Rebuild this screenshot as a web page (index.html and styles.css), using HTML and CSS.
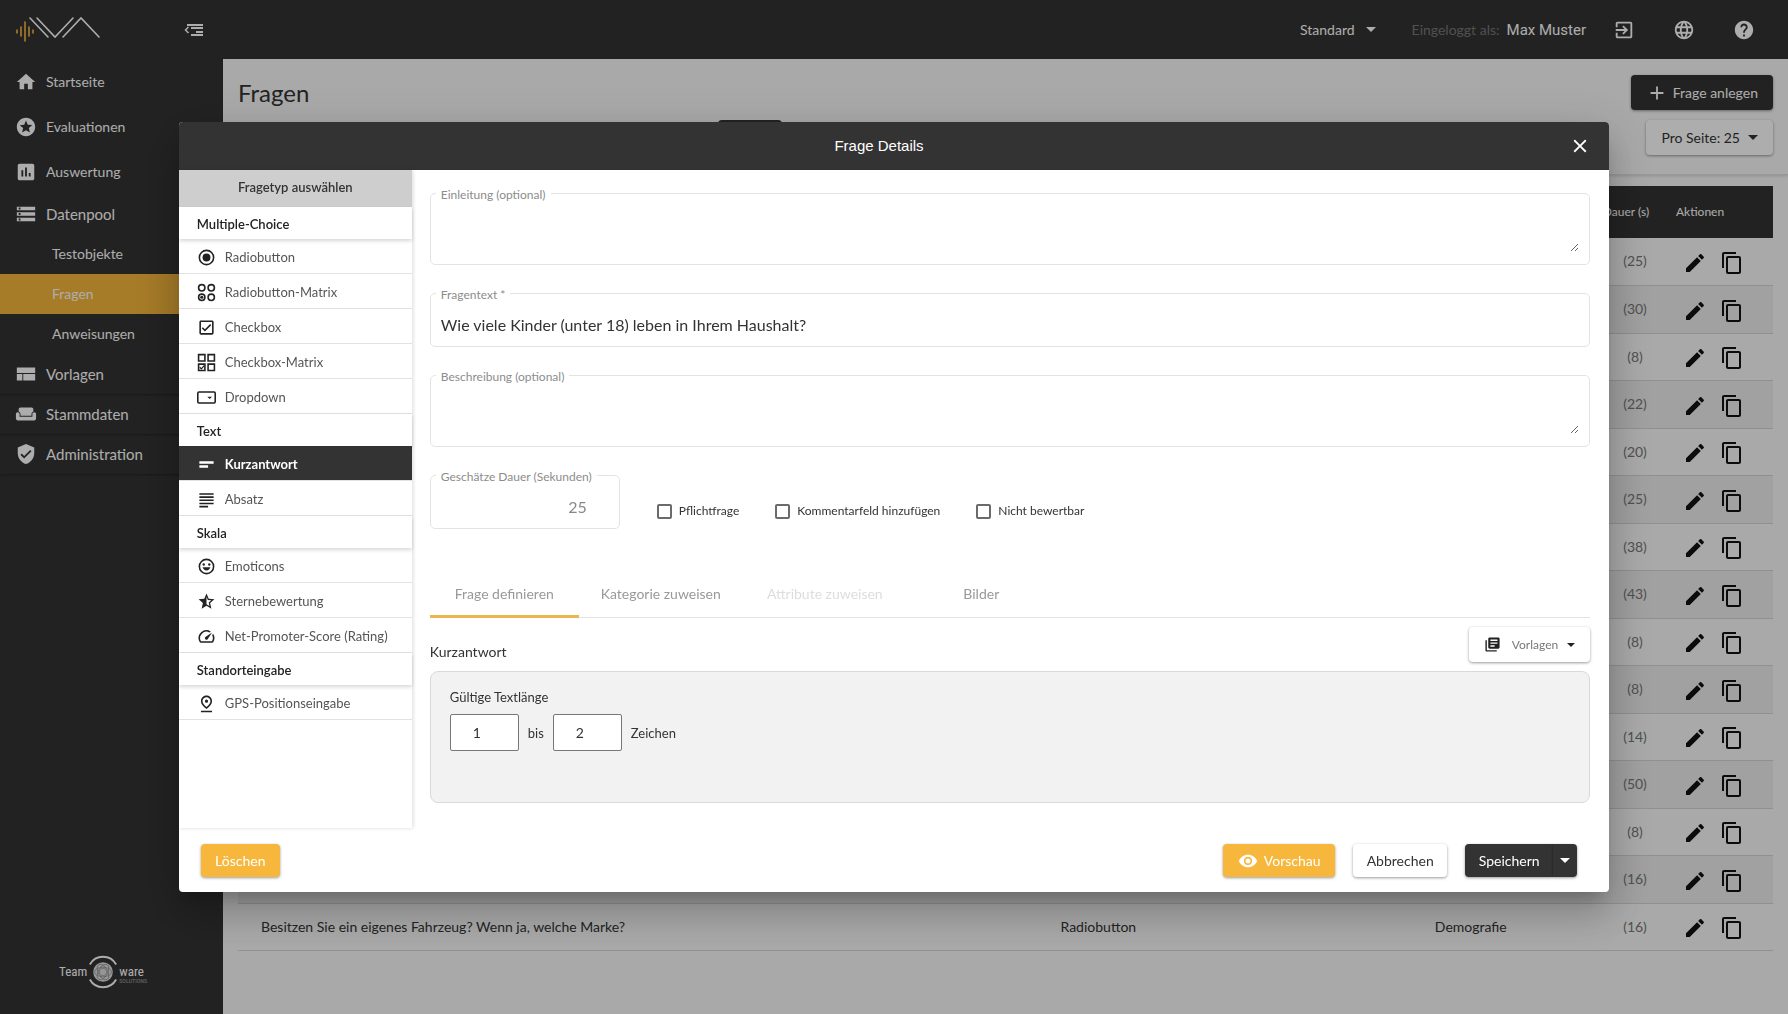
FILE: index.html
```html
<!DOCTYPE html>
<html lang="de">
<head>
<meta charset="utf-8">
<meta name="viewport" content="width=device-width, initial-scale=1">
<title>Fragen</title>
<link rel="stylesheet" href="styles.css">
</head>
<body>
<svg class="sprite" aria-hidden="true">
  <symbol id="home" viewBox="0 0 24 24"><path d="M10 20v-6h4v6h5v-8h3L12 3 2 12h3v8z"/></symbol>
  <symbol id="stars" viewBox="0 0 24 24"><path d="M11.99 2C6.47 2 2 6.48 2 12s4.47 10 9.99 10C17.52 22 22 17.52 22 12S17.52 2 11.99 2zm4.24 16L12 15.45 7.77 18l1.12-4.81-3.73-3.23 4.92-.42L12 5l1.92 4.53 4.92.42-3.73 3.23L16.23 18z"/></symbol>
  <symbol id="chart" viewBox="0 0 24 24"><path d="M19 3H5c-1.1 0-2 .9-2 2v14c0 1.1.9 2 2 2h14c1.1 0 2-.9 2-2V5c0-1.1-.9-2-2-2zM9 17H7v-7h2v7zm4 0h-2V7h2v10zm4 0h-2v-4h2v4z"/></symbol>
  <symbol id="storage" viewBox="0 0 24 24"><path d="M2 20h20v-4H2v4zm2-3h2v2H4v-2zM2 4v4h20V4H2zm4 3H4V5h2v2zm-4 7h20v-4H2v4zm2-3h2v2H4v-2z"/></symbol>
  <symbol id="quilt" viewBox="0 0 24 24"><path d="M2 5h20v6H2zM2 12h6v7H2zM9 12h13v7H9z"/></symbol>
  <symbol id="weekend" viewBox="0 0 24 24"><path d="M21 10c-1.1 0-2 .9-2 2v3H5v-3c0-1.1-.9-2-2-2s-2 .9-2 2v5c0 1.1.9 2 2 2h18c1.1 0 2-.9 2-2v-5c0-1.1-.9-2-2-2zm-3-5H6c-1.1 0-2 .9-2 2v2.15c1.16.41 2 1.51 2 2.82V14h12v-2.03c0-1.3.84-2.4 2-2.82V7c0-1.1-.9-2-2-2z"/></symbol>
  <symbol id="shield" viewBox="0 0 24 24"><path d="M12 1L3 5v6c0 5.55 3.84 10.74 9 12 5.16-1.26 9-6.45 9-12V5l-9-4zm-2 16l-4-4 1.41-1.41L10 14.17l6.59-6.59L18 9l-8 8z"/></symbol>
  <symbol id="exit" viewBox="0 0 24 24"><path d="M10.09 15.59L11.5 17l5-5-5-5-1.41 1.41L12.67 11H3v2h9.67l-2.58 2.59zM19 3H5c-1.11 0-2 .9-2 2v4h2V5h14v14H5v-4H3v4c0 1.1.89 2 2 2h14c1.1 0 2-.9 2-2V5c0-1.1-.9-2-2-2z"/></symbol>
  <symbol id="globe" viewBox="0 0 24 24"><path d="M11.99 2C6.47 2 2 6.48 2 12s4.47 10 9.99 10C17.52 22 22 17.52 22 12S17.52 2 11.99 2zm6.93 6h-2.95c-.32-1.25-.78-2.45-1.38-3.56 1.84.63 3.37 1.91 4.33 3.56zM12 4.04c.83 1.2 1.48 2.53 1.91 3.96h-3.82c.43-1.43 1.08-2.76 1.91-3.96zM4.26 14C4.1 13.36 4 12.69 4 12s.1-1.36.26-2h3.38c-.08.66-.14 1.32-.14 2 0 .68.06 1.34.14 2H4.26zm.82 2h2.95c.32 1.25.78 2.45 1.38 3.56-1.84-.63-3.37-1.9-4.33-3.56zm2.95-8H5.08c.96-1.66 2.49-2.93 4.33-3.56C8.81 5.55 8.35 6.75 8.03 8zM12 19.96c-.83-1.2-1.48-2.53-1.91-3.96h3.82c-.43 1.43-1.08 2.76-1.91 3.96zM14.34 14H9.66c-.09-.66-.16-1.32-.16-2 0-.68.07-1.35.16-2h4.68c.09.65.16 1.32.16 2 0 .68-.07 1.34-.16 2zm.25 5.56c.6-1.11 1.06-2.31 1.38-3.56h2.95c-.96 1.65-2.49 2.93-4.33 3.56zM16.36 14c.08-.66.14-1.32.14-2 0-.68-.06-1.34-.14-2h3.38c.16.64.26 1.31.26 2s-.1 1.36-.26 2h-3.38z"/></symbol>
  <symbol id="help" viewBox="0 0 24 24"><path d="M12 2C6.48 2 2 6.48 2 12s4.48 10 10 10 10-4.48 10-10S17.52 2 12 2zm1 17h-2v-2h2v2zm2.07-7.75l-.9.92C13.45 12.9 13 13.5 13 15h-2v-.5c0-1.1.45-2.1 1.17-2.83l1.24-1.26c.37-.36.59-.86.59-1.41 0-1.1-.9-2-2-2s-2 .9-2 2H8c0-2.21 1.79-4 4-4s4 1.79 4 4c0 .88-.36 1.68-.93 2.25z"/></symbol>
  <symbol id="edit" viewBox="0 0 24 24"><path d="M3 17.25V21h3.75L17.81 9.94l-3.75-3.75L3 17.25zM20.71 7.04c.39-.39.39-1.02 0-1.41l-2.34-2.34c-.39-.39-1.02-.39-1.41 0l-1.83 1.83 3.75 3.75 1.83-1.83z"/></symbol>
  <symbol id="copy" viewBox="0 0 24 24"><path d="M16 1H4c-1.1 0-2 .9-2 2v14h2V3h12V1zm3 4H8c-1.1 0-2 .9-2 2v14c0 1.1.9 2 2 2h11c1.1 0 2-.9 2-2V7c0-1.1-.9-2-2-2zm0 16H8V7h11v14z"/></symbol>
  <symbol id="plus" viewBox="0 0 24 24"><path d="M19 13h-6v6h-2v-6H5v-2h6V5h2v6h6v2z"/></symbol>
  <symbol id="caret" viewBox="0 0 10 5"><path d="M0 0l5 5 5-5z"/></symbol>
  <symbol id="close" viewBox="0 0 24 24"><path d="M19 6.41L17.59 5 12 10.59 6.41 5 5 6.41 10.59 12 5 17.59 6.41 19 12 13.41 17.59 19 19 17.59 13.41 12z"/></symbol>
  <symbol id="eye" viewBox="0 0 24 24"><path d="M12 4.5C7 4.5 2.73 7.61 1 12c1.73 4.39 6 7.5 11 7.5s9.27-3.11 11-7.5c-1.73-4.39-6-7.5-11-7.5zM12 17c-2.76 0-5-2.24-5-5s2.24-5 5-5 5 2.24 5 5-2.24 5-5 5zm0-8c-1.66 0-3 1.34-3 3s1.34 3 3 3 3-1.34 3-3-1.34-3-3-3z"/></symbol>
  <symbol id="books" viewBox="0 0 24 24"><path d="M4 6H2v14c0 1.1.9 2 2 2h14v-2H4V6zm16-4H8c-1.1 0-2 .9-2 2v12c0 1.1.9 2 2 2h12c1.1 0 2-.9 2-2V4c0-1.1-.9-2-2-2zm-1 9H9V9h10v2zm-4 4H9v-2h6v2zm4-8H9V5h10v2z"/></symbol>
  <symbol id="radio" viewBox="0 0 24 24"><circle cx="12" cy="12" r="9" fill="none" stroke="currentColor" stroke-width="2"/><circle cx="12" cy="12" r="5"/></symbol>
  <symbol id="radios" viewBox="0 0 24 24"><g fill="none" stroke="currentColor" stroke-width="2"><circle cx="6" cy="6" r="4"/><circle cx="18" cy="6" r="4"/><circle cx="6" cy="18" r="4"/><circle cx="18" cy="18" r="4"/></g><circle cx="6" cy="18" r="2"/></symbol>
  <symbol id="check" viewBox="0 0 24 24"><path d="M19 3H5c-1.1 0-2 .9-2 2v14c0 1.1.9 2 2 2h14c1.1 0 2-.9 2-2V5c0-1.1-.9-2-2-2zm0 16H5V5h14v14zM17.99 9l-1.41-1.42-6.59 6.59-2.58-2.57-1.42 1.41 4 3.99z"/></symbol>
  <symbol id="checks" viewBox="0 0 24 24"><g fill="none" stroke="currentColor" stroke-width="2"><path d="M2 2h8v8H2zM14 2h8v8h-8zM2 14h8v8H2zM14 14h8v8h-8z"/><path d="M3.500 18l2 2 3.500-4" stroke-width="1.500"/></g></symbol>
  <symbol id="dropdown" viewBox="0 0 24 24"><rect x="1" y="5" width="22" height="14" rx="1.500" fill="none" stroke="currentColor" stroke-width="2"/><path d="M13 11h6l-3 3z"/></symbol>
  <symbol id="short" viewBox="0 0 24 24"><path d="M3 8h18v3H3zM3 13h11v3H3z"/></symbol>
  <symbol id="lines" viewBox="0 0 24 24"><path d="M3 4h18v2H3zM3 8h18v2H3zM3 12h18v2H3zM3 16h18v2H3zM3 20h11v2H3z"/></symbol>
  <symbol id="mood" viewBox="0 0 24 24"><circle cx="12" cy="12" r="9" fill="none" stroke="currentColor" stroke-width="2"/><circle cx="8.500" cy="9.500" r="1.500"/><circle cx="15.500" cy="9.500" r="1.500"/><path d="M7 13h10c-.8 2.500-2.600 4-5 4s-4.200-1.500-5-4z"/></symbol>
  <symbol id="halfstar" viewBox="0 0 24 24"><path d="M22 9.240l-7.190-.62L12 2 9.190 8.630 2 9.240l5.460 4.730L5.820 21 12 17.270 18.180 21l-1.630-7.030L22 9.240zM12 15.400V6.100l1.710 4.040 4.380.38-3.320 2.880 1 4.280L12 15.400z"/></symbol>
  <symbol id="speed" viewBox="0 0 24 24"><path d="M20.380 8.570l-1.230 1.850a8 8 0 0 1-.22 7.580H5.070A8 8 0 0 1 15.580 6.850l1.850-1.230A10 10 0 0 0 3.350 19a2 2 0 0 0 1.720 1h13.850a2 2 0 0 0 1.740-1 10 10 0 0 0-.27-10.440zm-9.790 6.840a2 2 0 0 0 2.830 0l5.660-8.490-8.490 5.660a2 2 0 0 0 0 2.830z"/></symbol>
  <symbol id="pin" viewBox="0 0 24 24"><path d="M12 2C8.730 2 5 4.460 5 9.150c0 3.120 2.330 6.410 7 9.850 4.670-3.440 7-6.730 7-9.850C19 4.460 15.270 2 12 2zm0 14.470c-3.280-2.650-5-5.170-5-7.320C7 5.400 10.070 4 12 4s5 1.400 5 5.150c0 2.160-1.720 4.670-5 7.320zM12 7a2 2 0 1 0 0 4 2 2 0 0 0 0-4zM5 21h14v2H5z"/></symbol>
</svg>

<div class="app">
  <aside class="sidebar">
    <div class="brand">
      <svg class="brand-logo" viewBox="0 0 86 30" role="img" aria-label="IVA">
        <g fill="none" stroke-linecap="round"><path d="M2 15v3M6 12v9M10 7v19M14 12v9M18 15v3" stroke="#f6b73c" stroke-width="1.600"/><path d="M15 3l18 19M22 3l18 19 18-19M48 22L66 3l18 19" stroke="#fff" stroke-width="1.600"/></g>
      </svg>
      <button class="icon-btn" type="button" aria-label="Menü einklappen"><svg class="fold" viewBox="0 0 20 14"><path d="M3 1h16v2H3zM7 4h12v2H7zM12 8h7v2h-7zM7 11h12v2H7z"/><path d="M4.500 4L1.500 7l3 3" fill="none" stroke="currentColor" stroke-width="1.500"/></svg></button>
    </div>
    <nav class="nav">
      <a class="tall" href="#"><svg class="icon"><use href="#home"/></svg>Startseite</a>
      <a class="tall" href="#"><svg class="icon"><use href="#stars"/></svg>Evaluationen</a>
      <a class="tall" href="#"><svg class="icon"><use href="#chart"/></svg>Auswertung</a>
      <a href="#"><svg class="icon"><use href="#storage"/></svg>Datenpool</a>
      <a class="sub" href="#">Testobjekte</a>
      <a class="sub active" href="#">Fragen</a>
      <a class="sub" href="#">Anweisungen</a>
      <a class="panel" href="#"><svg class="icon"><use href="#quilt"/></svg>Vorlagen</a>
      <a class="panel" href="#"><svg class="icon"><use href="#weekend"/></svg>Stammdaten</a>
      <a class="panel" href="#"><svg class="icon"><use href="#shield"/></svg>Administration</a>
    </nav>
    <div class="vendor">
      <span class="vendor-name">Team</span>
      <svg class="vendor-mark" viewBox="0 0 32 36" aria-hidden="true"><g fill="none" stroke="#fff"><path d="M2 10a16 16 0 0 1 28 0M2 26a16 16 0 0 0 28 0" stroke-width="2"/></g><circle cx="16" cy="18" r="10.500" fill="#ddd"/><g fill="none" stroke="#888" stroke-width=".7"><circle cx="16" cy="18" r="4"/><ellipse cx="16" cy="18" rx="9" ry="5"/><ellipse cx="16" cy="18" rx="9" ry="5" transform="rotate(60 16 18)"/><ellipse cx="16" cy="18" rx="9" ry="5" transform="rotate(120 16 18)"/></g></svg>
      <span class="vendor-name">ware<small>SOLUTIONS</small></span>
    </div>
  </aside>

  <div class="content">
    <header class="topbar">
      <button class="tenant" type="button">Standard <svg class="caret"><use href="#caret"/></svg></button>
      <span class="login-label">Eingeloggt als:</span>
      <span class="user">Max Muster</span>
      <div class="top-icons">
        <button class="icon-btn" type="button" aria-label="Abmelden"><svg class="icon"><use href="#exit"/></svg></button>
        <button class="icon-btn" type="button" aria-label="Sprache"><svg class="icon"><use href="#globe"/></svg></button>
        <button class="icon-btn" type="button" aria-label="Hilfe"><svg class="icon"><use href="#help"/></svg></button>
      </div>
    </header>
    <section class="page-head">
      <div class="head-row">
        <h1>Fragen</h1>
        <button class="btn dark create" type="button"><svg class="icon"><use href="#plus"/></svg>Frage anlegen</button>
      </div>
      <div class="head-row second">
        <span class="toggle"></span>
        <button class="btn light" type="button">Pro Seite: 25 <svg class="caret"><use href="#caret"/></svg></button>
      </div>
    </section>
    <main class="table-wrap">
      <table>
        <thead><tr><th class="c-text"></th><th class="c-type"></th><th class="c-cat"></th><th class="c-time">Dauer (s)</th><th class="c-act">Aktionen</th></tr></thead>
        <tbody id="rows"></tbody>
      </table>
    </main>
  </div>
</div>

<div class="backdrop">
  <div class="dialog" role="dialog" aria-modal="true" aria-labelledby="dlg-title">
    <header class="dlg-head">
      <h2 id="dlg-title">Frage Details</h2>
      <button class="icon-btn" type="button" aria-label="Schließen"><svg class="icon"><use href="#close"/></svg></button>
    </header>
    <div class="dlg-body">
      <div class="types">
        <div class="types-title">Fragetyp auswählen</div>
        <h3>Multiple-Choice</h3>
        <button type="button"><svg><use href="#radio"/></svg>Radiobutton</button>
        <button type="button"><svg><use href="#radios"/></svg>Radiobutton-Matrix</button>
        <button type="button"><svg><use href="#check"/></svg>Checkbox</button>
        <button type="button"><svg><use href="#checks"/></svg>Checkbox-Matrix</button>
        <button type="button"><svg><use href="#dropdown"/></svg>Dropdown</button>
        <h3>Text</h3>
        <button class="selected" type="button"><svg><use href="#short"/></svg>Kurzantwort</button>
        <button type="button"><svg><use href="#lines"/></svg>Absatz</button>
        <h3>Skala</h3>
        <button type="button"><svg><use href="#mood"/></svg>Emoticons</button>
        <button type="button"><svg><use href="#halfstar"/></svg>Sternebewertung</button>
        <button type="button"><svg><use href="#speed"/></svg>Net-Promoter-Score (Rating)</button>
        <h3>Standorteingabe</h3>
        <button type="button"><svg><use href="#pin"/></svg>GPS-Positionseingabe</button>
      </div>
      <form class="form">
        <div class="field area"><label for="intro">Einleitung (optional)</label><textarea id="intro"></textarea></div>
        <div class="field"><label for="question">Fragentext *</label><input id="question" type="text" value="Wie viele Kinder (unter 18) leben in Ihrem Haushalt?"></div>
        <div class="field area"><label for="desc">Beschreibung (optional)</label><textarea id="desc"></textarea></div>
        <div class="options">
          <div class="field duration"><label for="duration">Geschätze Dauer (Sekunden)</label><input id="duration" type="text" inputmode="numeric" value="25"></div>
          <label class="tick"><input type="checkbox">Pflichtfrage</label>
          <label class="tick"><input type="checkbox">Kommentarfeld hinzufügen</label>
          <label class="tick"><input type="checkbox">Nicht bewertbar</label>
        </div>
        <div class="tabs" role="tablist">
          <button class="tab on" type="button" role="tab" aria-selected="true">Frage definieren</button>
          <button class="tab wide" type="button" role="tab">Kategorie zuweisen</button>
          <button class="tab wide" type="button" role="tab" disabled>Attribute zuweisen</button>
          <button class="tab" type="button" role="tab">Bilder</button>
        </div>
        <div class="answer-head">
          <h4>Kurzantwort</h4>
          <button class="btn light templates" type="button"><svg class="books"><use href="#books"/></svg>Vorlagen <svg class="caret"><use href="#caret"/></svg></button>
        </div>
        <div class="answer">
          <label for="min">Gültige Textlänge</label>
          <div class="range">
            <input id="min" type="text" inputmode="numeric" value="1">
            <label for="max">bis</label>
            <input id="max" type="text" inputmode="numeric" value="2">
            <span>Zeichen</span>
          </div>
        </div>
      </form>
    </div>
    <footer class="dlg-foot">
      <button class="btn yellow delete" type="button">Löschen</button>
      <button class="btn yellow preview" type="button"><svg class="eye"><use href="#eye"/></svg>Vorschau</button>
      <button class="btn light cancel" type="button">Abbrechen</button>
      <div class="split"><button class="btn dark" type="button">Speichern</button><button class="btn dark more" type="button" aria-label="Weitere Optionen"><svg class="caret"><use href="#caret"/></svg></button></div>
    </footer>
  </div>
</div>
<script src="rows.js"></script>
</body>
</html>
```
FILE: styles.css
```css
* { box-sizing: border-box; }
body {
  margin: 0;
  font-family: Lato, "Open Sans", sans-serif;
  font-size: 14px;
  line-height: 20px;
  color: #333;
  background: #fafafa;
}
button, input, textarea { font: inherit; color: inherit; }
button { border: 0; padding: 0; background: none; }
h1, h2, h3, h4 { margin: 0; font-weight: 400; }
svg { fill: currentColor; flex: none; }
.sprite { position: absolute; width: 0; height: 0; }
.icon { width: 22px; height: 22px; }
.caret { width: 10px; height: 5px; }
.icon-btn { display: flex; }

.app { display: flex; min-height: 100vh; }
.sidebar { width: 223px; display: flex; flex-direction: column; background: #333; color: #fff; }
.brand { height: 59px; padding: 0 19px 0 15px; display: flex; align-items: center; justify-content: space-between; }
.brand-logo { width: 86px; height: 30px; }
.fold { width: 20px; height: 14px; }
.nav a { display: flex; align-items: center; gap: 9px; height: 40px; padding-left: 15px; color: #fff; text-decoration: none; font-size: 15px; }
.nav a.tall { height: 45px; font-size: 14px; }
.nav a.sub { padding-left: 52px; font-size: 14px; }
.nav a.active { background: #f6b73c; }
.nav a.panel { box-shadow: 0 1px 2px rgba(0, 0, 0, .3); }
.vendor { margin: auto auto 24px 59px; display: flex; align-items: center; gap: 1px; }
.vendor-mark { width: 30px; height: 36px; }
.vendor-name { position: relative; font-family: "Liberation Sans Narrow", "Roboto Condensed", Roboto, sans-serif; font-size: 13px; }
.vendor-name small { position: absolute; left: 0; top: 15px; font-size: 6px; line-height: 8px; opacity: .5; }

.content { flex: 1; min-width: 0; display: flex; flex-direction: column; }
.topbar { height: 59px; padding-right: 33px; display: flex; align-items: center; justify-content: flex-end; background: #333; color: #fff; }
.tenant { display: flex; align-items: center; gap: 11px; }
.login-label { margin-left: 36px; color: #777; }
.user { margin-left: 7px; font-family: Roboto, sans-serif; font-size: 15px; }
.top-icons { display: flex; gap: 38px; margin-left: 27px; }
.page-head { padding: 16px 15px 19px; border-bottom: 1px solid #e0e0e0; box-shadow: 0 1px 3px rgba(0, 0, 0, .15); }
.head-row { display: flex; align-items: center; justify-content: space-between; }
.head-row.second { margin-top: 10px; align-items: flex-start; }
h1 { font-size: 24px; line-height: 35px; }
.toggle { width: 64px; height: 35px; margin-left: 480px; background: #333; border-radius: 4px; }
.table-wrap { padding: 11px 15px 0; }

.btn { display: inline-flex; align-items: center; height: 35px; border-radius: 4px; box-shadow: 0 1px 3px rgba(0, 0, 0, .4); }
.dark { background: #333; color: #fff; }
.light { background: #fff; gap: 8px; padding: 0 15px; }
.yellow { background: #f6b73c; color: #fff; }
.create { padding: 0 15px; gap: 5px; }

table { width: 100%; border-collapse: collapse; table-layout: fixed; }
th { height: 52px; padding: 0; background: #333; color: #fff; font-size: 12px; font-weight: 400; text-align: center; }
td { height: 47px; padding: 0; border-bottom: 1px solid #d5d5d5; }
tr:nth-child(even) td { height: 48px; background: #ededed; }
.c-text { width: 50%; }
.c-type { width: 23%; }
.c-cat { width: auto; }
.c-time { width: 80px; }
.c-act { width: 110px; }
th.c-time { padding-left: 6px; }
th.c-act { text-align: left; padding-left: 13px; }
td.c-text { padding-left: 23px; }
td.c-type { padding-left: 55px; }
td.c-cat, td.c-time { text-align: center; }
td.c-time { padding-left: 24px; color: #777; }
.actions { display: flex; gap: 13px; padding: 3px 0 0 20px; color: #111; }
.actions .icon { width: 24px; height: 24px; }

.backdrop { position: fixed; inset: 0; display: flex; align-items: center; justify-content: center; background: rgba(0, 0, 0, .32); }
.dialog { width: 80vw; background: #fff; border-radius: 4px; overflow: hidden; box-shadow: 0 11px 15px -7px rgba(0, 0, 0, .2), 0 24px 38px 3px rgba(0, 0, 0, .14), 0 9px 46px 8px rgba(0, 0, 0, .12); }
.dlg-head { display: flex; align-items: center; gap: 8px; height: 48px; padding: 0 18px; background: #333; color: #fff; }
.dlg-head h2 { flex: 1; text-align: center; font: 15px/20px "Liberation Sans", Arial, sans-serif; }
.dlg-body { display: flex; }

.types { width: 233px; box-shadow: 1px 0 4px rgba(0, 0, 0, .15); font-size: 13px; }
.types-title { height: 37px; line-height: 35px; text-align: center; font-weight: 600; background: #cecece; }
.types h3 { height: 32px; padding-left: 18px; font-size: 13px; line-height: 34px; font-weight: 600; color: #222; box-shadow: 0 2px 4px rgba(0, 0, 0, .16); }
.types button { display: flex; align-items: center; gap: 9px; width: 100%; height: 35px; padding: 2px 0 0 18px; border-bottom: 1px solid #e2e2e2; color: #555; }
.types svg { width: 19px; height: 19px; color: #222; }
.types .selected { background: #333; color: #fff; font-weight: 700; }
.types .selected svg { color: #fff; }

.form { flex: 1; min-width: 0; padding: 23px 19px 25px 18px; }
.field { position: relative; height: 54px; margin-bottom: 28px; border: 1px solid #e3e3e3; border-radius: 5px; }
.field.area { height: 72px; }
.field label { position: absolute; left: 5px; top: -9px; padding: 0 5px; background: #fff; color: #8c8c8c; font-size: 12px; line-height: 20px; }
.field input, .field textarea { display: block; width: 100%; height: 100%; padding: 8px 10px 0; border: 0; outline: 0; background: none; font-size: 16px; }
.field textarea { width: calc(100% - 10px); height: 58px; }
.options { display: flex; align-items: center; }
.options .field { width: 190px; margin: 0 37px 0 0; }
.field.duration input { text-align: right; padding-right: 32px; color: #888; }
.tick { display: flex; align-items: center; gap: 7px; margin: 18px 36px 0 0; font-size: 12px; }
.tick input { appearance: none; width: 15px; height: 15px; margin: 0; border: 2px solid #6b6b6b; border-radius: 2px; }
.tabs { display: flex; margin-top: 41px; border-bottom: 1px solid #e3e3e3; }
.tab { width: 149px; height: 48px; margin-bottom: -1px; padding-top: 3px; border-bottom: 3px solid transparent; color: #999; }
.tab.wide { width: 164px; }
.tab.on { border-color: #eab650; }
.tab:disabled { color: #ddd; }
.answer-head { display: flex; align-items: center; justify-content: space-between; margin: 9px 0; }
.answer-head h4 { padding-top: 14px; font-size: 14px; }
.templates { font-size: 12px; color: #777; gap: 9px; }
.templates .caret { width: 8px; height: 4px; }
.books { width: 17px; height: 17px; margin-right: 2px; }
.templates svg { color: #222; }
.answer { height: 132px; padding: 15px 19px; border: 1px solid #d9d9d9; border-radius: 8px; background: #f2f2f2; font-size: 13px; }
.range { display: flex; align-items: center; gap: 9px; margin-top: 7px; }
.range input { width: 69px; height: 37px; padding: 0 15px 0 0; border: 1px solid #777; border-radius: 2px; background: #fff; font-size: 14px; text-align: center; }

.dlg-foot { display: flex; align-items: flex-start; padding: 16px 32px 15px 22px; }
.dlg-foot .btn { height: 33px; justify-content: center; }
.dlg-foot .delete { width: 79px; margin-right: auto; }
.dlg-foot .preview { width: 112px; gap: 6px; }
.eye { width: 20px; height: 20px; }
.cancel { width: 94px; margin: 0 18px; }
.split { display: flex; }
.split .btn { width: 88px; border-radius: 4px 0 0 4px; }
.split .more { width: 24px; border-radius: 0 4px 4px 0; }
```
FILE: rows.js
```js
const durations = [25, 30, 8, 22, 20, 25, 38, 43, 8, 8, 14, 50, 8, 16, 16];
const last = ["Besitzen Sie ein eigenes Fahrzeug? Wenn ja, welche Marke?", "Radiobutton", "Demografie"];
document.getElementById("rows").innerHTML = durations.map((seconds, i) => {
  const [text, type, category] = i === durations.length - 1 ? last : ["", "", ""];
  return `<tr><td class="c-text">${text}</td><td class="c-type">${type}</td><td class="c-cat">${category}</td>
    <td class="c-time">(${seconds})</td>
    <td class="c-act"><div class="actions">
      <button class="icon-btn" type="button" aria-label="Bearbeiten"><svg class="icon"><use href="#edit"/></svg></button>
      <button class="icon-btn" type="button" aria-label="Kopieren"><svg class="icon"><use href="#copy"/></svg></button>
    </div></td></tr>`;
}).join("");
```
